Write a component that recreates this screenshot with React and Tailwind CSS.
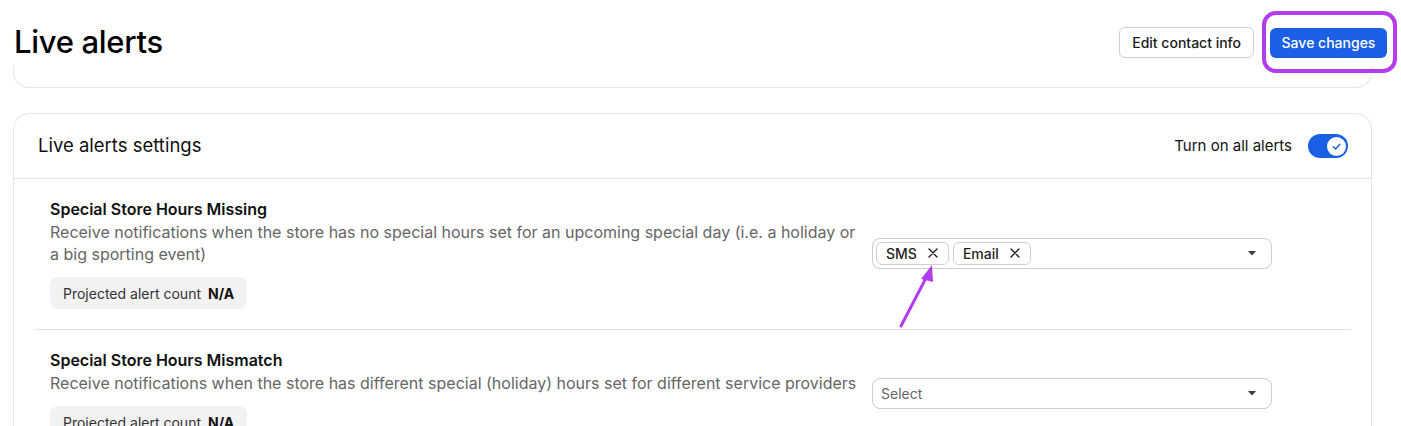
import React from "react";

function Caret() {
  return (
    <svg width="10" height="6" viewBox="0 0 10 6" className="shrink-0">
      <path d="M1 1 L9 1 L5 5.5 Z" fill="#3a3a3a" />
    </svg>
  );
}

function XIcon() {
  return (
    <svg width="10" height="10" viewBox="0 0 10 10" className="shrink-0">
      <path d="M1 1 L9 9 M9 1 L1 9" stroke="#1f1f1f" strokeWidth="1.4" strokeLinecap="round" />
    </svg>
  );
}

function Chip({ label }) {
  return (
    <div className="flex h-[23px] items-center rounded-[6px] border border-[#cfcfcf] pl-[9px] pr-[10px] text-[14px] font-medium text-[#1f1f1f]">
      <span>{label}</span>
      <span className="ml-[11px] flex items-center">
        <XIcon />
      </span>
    </div>
  );
}

function Row({ title, desc, children, last }) {
  return (
    <div className={"flex items-center gap-2 px-4 pt-[18px] pb-[20px] " + (last ? "" : "border-b border-[#e3e3e3]")}>
      <div className="w-[814px] shrink-0">
        <div className="text-[16px] leading-6 font-semibold text-[#111]">{title}</div>
        <div className="text-[16px] leading-[22px] text-[#666666]">{desc}</div>
        <div className="mt-3 inline-flex h-8 items-center rounded-[8px] bg-[#f2f2f2] px-[13px] text-[14px] text-[#333]">
          Projected alert count
          <span className="ml-[7px] font-bold text-[#111]">N/A</span>
        </div>
      </div>
      <div className="w-[400px] shrink-0">{children}</div>
    </div>
  );
}

export default function App() {
  return (
    <div className="relative h-[426px] overflow-hidden bg-white font-['Inter',sans-serif] text-[#111]">
      {/* header */}
      <div className="relative flex h-[66px] items-start justify-between px-[14px] pt-[24px]">
        <h1 className="text-[31px] leading-9 font-medium tracking-[-0.3px] text-black">Live alerts</h1>
        <div className="mt-[3px] flex items-center gap-4">
          <button className="h-[31px] rounded-[6px] border border-[#cfcfcf] bg-white px-3 text-[14px] font-medium text-[#1a1a1a]">
            Edit contact info
          </button>
          <button className="h-[30px] w-[117px] rounded-[6px] bg-[#1b60e4] text-[14px] font-medium text-white">
            Save changes
          </button>
        </div>
      </div>

      {/* previous card stub */}
      <div className="ml-[13px] mr-[29px] h-[22px] rounded-b-[16px] border-x border-b border-[#e6e6e6]"></div>

      {/* settings card */}
      <div className="ml-[13px] mr-[29px] mt-[25px] rounded-[16px] border border-[#e6e6e6]">
        <div className="flex h-[65px] items-center justify-between border-b border-[#e3e3e3] pl-[24px] pr-[23px]">
          <div className="text-[18.5px] text-[#111]">Live alerts settings</div>
          <div className="flex items-center gap-4">
            <span className="text-[15px] text-[#111]">Turn on all alerts</span>
            <div className="flex h-6 w-10 items-center justify-end rounded-full bg-[#1b60e4] pr-[2px]">
              <div className="flex h-[19px] w-[19px] items-center justify-center rounded-full bg-white">
                <svg width="11" height="11" viewBox="0 0 12 12">
                  <path d="M2.5 6.3 L5 8.6 L9.6 3.6" fill="none" stroke="#1b60e4" strokeWidth="1.6" strokeLinecap="round" strokeLinejoin="round" />
                </svg>
              </div>
            </div>
          </div>
        </div>
        <div className="px-5">
          <Row
            title="Special Store Hours Missing"
            desc="Receive notifications when the store has no special hours set for an upcoming special day (i.e. a holiday or a big sporting event)"
          >
            <div className="flex h-[31px] items-center rounded-[8px] border border-[#cccccc] pl-[3px] pr-[14px]">
              <div className="flex flex-1 items-center gap-[4px]">
                <Chip label="SMS" />
                <Chip label="Email" />
              </div>
              <Caret />
            </div>
          </Row>
          <Row
            last
            title="Special Store Hours Mismatch"
            desc="Receive notifications when the store has different special (holiday) hours set for different service providers"
          >
            <div className="flex h-[31px] items-center rounded-[8px] border border-[#cccccc] pl-[8px] pr-[14px]">
              <span className="flex-1 text-[14px] text-[#666]">Select</span>
              <Caret />
            </div>
          </Row>
        </div>
      </div>

      {/* annotations */}
      <div className="pointer-events-none absolute left-[1262px] top-[11px] h-[62px] w-[135px] rounded-[14px] border-4 border-[#b43cf0]"></div>
      <svg className="pointer-events-none absolute left-0 top-0" width="1401" height="426">
        <line x1="901" y1="326" x2="926" y2="278" stroke="#b43cf0" strokeWidth="3" strokeLinecap="round" />
        <path d="M932 265 L921 279 L933 282 Z" fill="#b43cf0" />
      </svg>
    </div>
  );
}
